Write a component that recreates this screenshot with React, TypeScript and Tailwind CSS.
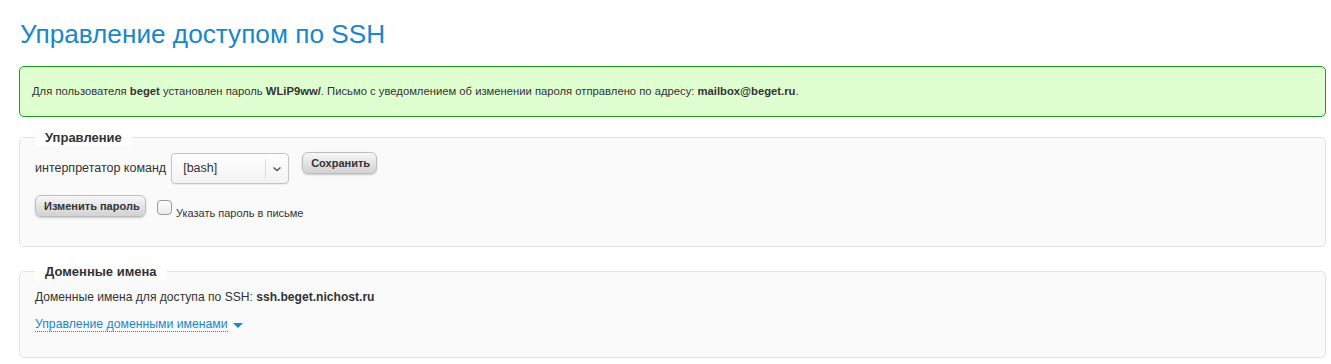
import React, { useState } from "react";

const btn =
  "h-[22px] px-[8px] rounded-[6px] border border-[#bdbdbd] bg-gradient-to-b from-[#f7f7f7] to-[#d2d2d2] text-[11px] font-bold text-[#333] shadow-[0_1px_2px_rgba(0,0,0,0.2)] leading-none whitespace-nowrap";

export default function App() {
  const [shell] = useState("[bash]");
  const [sendPassword, setSendPassword] = useState(false);

  return (
    <div
      className="min-h-[364px] bg-white pl-[19px] pr-[5px] pt-[19px] text-[#333]"
      style={{ fontFamily: '"Liberation Sans", Arial, sans-serif' }}
    >
      <h1 className="text-[26.2px] leading-[30px] text-[#1a87c9] pl-px">
        Управление доступом по SSH
      </h1>

      <div className="mt-[17px] h-[51px] flex items-center rounded-[5px] border border-[#1d9e1d] bg-[#dfffd0] pl-[12px] text-[11.25px]">
        <p>
          Для пользователя <b>beget</b> установлен пароль <b>WLiP9ww/</b>. Письмо с уведомлением об изменении
          пароля отправлено по адресу: <b>mailbox@beget.ru</b>.
        </p>
      </div>

      <fieldset className="mt-[12px] rounded-[5px] border border-[#e2e2e2] bg-[#fafafa] pl-[15px] pt-[7px] pb-[27px]">
        <legend className="bg-white px-[10px] text-[13px] font-bold leading-[17px]">Управление</legend>

        <div className="flex items-start">
          <span className="mt-[8px] text-[12.5px] leading-[14px]">интерпретатор команд</span>
          <div className="ml-[5px] flex h-[31px] w-[118px] items-center rounded-[4px] border border-[#c4c4c4] bg-gradient-to-b from-white to-[#f3f3f3] shadow-[0_1px_1px_rgba(0,0,0,0.06)]">
            <span className="flex-1 pl-[11px] text-[12.5px]">{shell}</span>
            <span className="h-[19px] w-px bg-[#dcdcdc]" />
            <svg width="22" height="10" viewBox="0 0 22 10" className="shrink-0">
              <path d="M7.5 3.5 L11 6.5 L14.5 3.5" fill="none" stroke="#555" strokeWidth="1.5" />
            </svg>
          </div>
          <button className={`${btn} ml-[13px] -mt-px w-[75px]`}>Сохранить</button>
        </div>

        <div className="mt-[11px] flex items-start">
          <button className={`${btn} w-[111px]`}>Изменить пароль</button>
          <label className="ml-[11px] mt-[5px] flex items-start">
            <span
              onClick={() => setSendPassword(!sendPassword)}
              className="block h-[15px] w-[15px] rounded-[4px] border border-[#9a9a9a] bg-gradient-to-b from-white to-[#eaeaea]"
            />
            <span className="ml-[4px] mt-[7px] text-[11px] leading-[12px]">Указать пароль в письме</span>
          </label>
        </div>
      </fieldset>

      <fieldset className="mt-[16px] rounded-[5px] border border-[#e2e2e2] bg-[#fafafa] pl-[15px] pt-[10px] pb-[25px]">
        <legend className="bg-white px-[10px] text-[13px] font-bold leading-[17px]">Доменные имена</legend>
        <p className="text-[12.1px] leading-[14px]">
          Доменные имена для доступа по SSH: <b>ssh.beget.nichost.ru</b>
        </p>
        <div className="mt-[13px] flex items-center">
          <a className="border-b border-dotted border-[#1a87c9] text-[12.25px] leading-[14px] text-[#1a87c9]">
            Управление доменными именами
          </a>
          <svg width="10" height="6" viewBox="0 0 10 6" className="ml-[5px] mt-[3px]">
            <path d="M0 0 L10 0 L5 5 Z" fill="#1a87c9" />
          </svg>
        </div>
      </fieldset>
    </div>
  );
}
